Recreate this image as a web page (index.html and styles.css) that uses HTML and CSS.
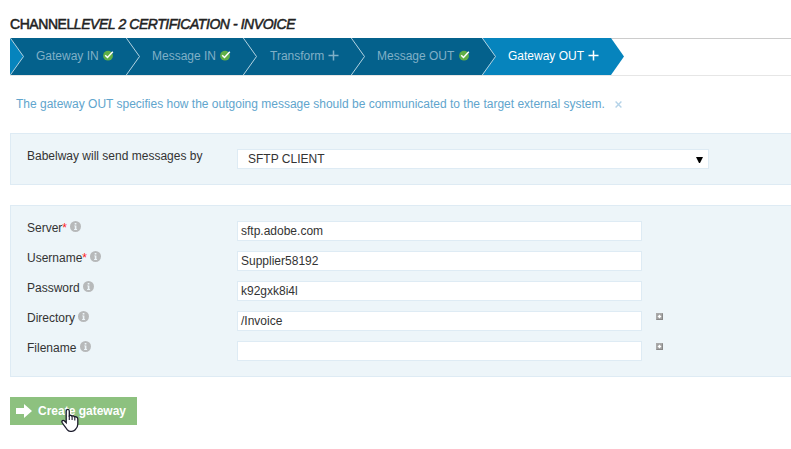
FILE: index.html
```html
<!DOCTYPE html>
<html lang="en">
<head>
<meta charset="utf-8">
<title>Gateway OUT</title>
<link rel="stylesheet" href="styles.css">
</head>
<body>
<svg width="0" height="0" class="defs">
  <defs>
    <symbol id="check" viewBox="0 0 11 11"><circle cx="5" cy="5.7" r="4.9" fill="#5fae47"/><path d="M2.2 5.2 4.5 7.5 9.8 1.8" fill="none" stroke="#fff" stroke-width="1.5"/></symbol>
    <symbol id="plus" viewBox="0 0 11 11"><path d="M5.5 .5V10.5M.5 5.5H10.5" fill="none" stroke="currentColor" stroke-width="1.5"/></symbol>
    <symbol id="info" viewBox="0 0 11 11"><circle cx="5.5" cy="5.5" r="5.5" fill="#b7b9ba"/><path d="M4.7 2h1.7v1.4H4.7zM4.2 4.4h2.2v3.5h.7v1H4.1v-1h.7V5.3h-.6z" fill="#edf5f9"/></symbol>
    <symbol id="expand" viewBox="0 0 7 7"><path d="M0 0h7v7H0z" fill="#888"/><path d="M0 0h7L0 7z" fill="#aaa"/><path d="M1 1h5v5H1z" fill="#a3a3a3"/><path d="M3 2h1v1h1v1H4v1H3V4H2V3h1z" fill="#fff" stroke="#fff" stroke-width=".4"/></symbol>
  </defs>
</svg>
<h1 class="title">CHANNEL<em>LEVEL 2 CERTIFICATION - INVOICE</em></h1>
<nav class="steps">
  <div class="step gateway-in"><svg class="chevron" viewBox="0 0 14 37"><path d="M0 0 13.5 18.5 0 37z" fill="#0684bd"/><path class="edge" d="M.3 0 13.5 18.5 .3 37"/></svg><span>Gateway IN</span><svg class="mark"><use href="#check"/></svg></div>
  <div class="step message-in"><svg class="chevron" viewBox="0 0 14 37"><path class="edge" d="M.3 0 13.5 18.5 .3 37"/></svg><span>Message IN</span><svg class="mark"><use href="#check"/></svg></div>
  <div class="step transform"><svg class="chevron" viewBox="0 0 14 37"><path class="edge" d="M.3 0 13.5 18.5 .3 37"/></svg><span>Transform</span><svg class="mark"><use href="#plus"/></svg></div>
  <div class="step message-out"><svg class="chevron" viewBox="0 0 14 37"><path class="edge" d="M.3 0 13.5 18.5 .3 37"/></svg><span>Message OUT</span><svg class="mark"><use href="#check"/></svg></div>
  <div class="step gateway-out"><svg class="chevron" viewBox="0 0 14 37"><path d="M0 0 13.5 18.5 0 37z" fill="#04618c"/><path class="edge" d="M.3 0 13.5 18.5 .3 37"/></svg><span>Gateway OUT</span><svg class="mark"><use href="#plus"/></svg></div>
  <svg class="chevron" viewBox="0 0 14 37"><path d="M0 0 13 18.5 0 37z" fill="#0684bd"/></svg>
</nav>
<p class="hint"><span>The gateway OUT specifies how the outgoing message should be communicated to the target external system.</span><svg class="close" viewBox="0 0 7 7"><path d="M.6 .6 6.4 6.4M6.4 .6 .6 6.4"/></svg></p>
<section class="panel method">
  <span class="label">Babelway will send messages by</span>
  <div class="select"><span>SFTP CLIENT</span><svg class="arrow" viewBox="0 0 7 6"><path d="M0 0h7L4 6H3z"/></svg></div>
</section>
<section class="panel fields">
  <div class="row"><div class="label"><span>Server<b>*</b></span><svg class="info"><use href="#info"/></svg></div><div class="field">sftp.adobe.com</div></div>
  <div class="row"><div class="label"><span>Username<b>*</b></span><svg class="info"><use href="#info"/></svg></div><div class="field">Supplier58192</div></div>
  <div class="row"><div class="label"><span>Password</span><svg class="info"><use href="#info"/></svg></div><div class="field">k92gxk8i4l</div></div>
  <div class="row"><div class="label"><span>Directory</span><svg class="info"><use href="#info"/></svg></div><div class="field">/Invoice</div><svg class="expand"><use href="#expand"/></svg></div>
  <div class="row"><div class="label"><span>Filename</span><svg class="info"><use href="#info"/></svg></div><div class="field"></div><svg class="expand"><use href="#expand"/></svg></div>
</section>
<div class="create"><svg class="go" viewBox="0 0 16 14"><path d="M0 4h8V0l8 7-8 7v-4H0z"/></svg><span>Create gateway</span>
  <svg class="cursor" viewBox="0 0 18 24"><path d="M5.5 1.5C6.8.3 8.3 1 8.3 2.8v4.4c.8-.6 2-.5 2.6.4.9-.5 2-.2 2.5.8 1.6-.5 3.4.4 3.4 2.2v5.1c0 2.6-1 4-2.6 5.6-1 1.1-2 1.5-3.4 1.5H9.2c-1.4 0-2.2-.5-3-1.6C4.6 18.8 2.5 16.5 1 13.8c-.6-1.4 1.1-2.5 2.3-1.5l1.9 1.9V2.8z" fill="#fff" stroke="#1b1b2b" stroke-width="1.3"/><path d="M8.3 7v4.5M11.1 7.8v3.7M13.8 8.8v3.2" stroke="#1b1b2b" stroke-width="1.1"/></svg>
</div>
</body>
</html>
```
FILE: styles.css
```css
* { box-sizing: border-box; }
body { margin: 0; padding: 15px 0 0 10px; height: 449px; overflow: hidden; background: #fff; color: #333; font: 12px/18px "Liberation Sans", Arial, sans-serif; }
svg { flex: none; display: block; }
.defs { position: absolute; }
.title { margin: 0 0 5px; font-size: 14px; line-height: 18px; font-weight: normal; -webkit-text-stroke: .5px #222; letter-spacing: -.44px; white-space: nowrap; color: #222; }
.steps { display: flex; height: 38px; border-bottom: 1px solid #e6e6e6; background: linear-gradient(#ccc 1px, #fff 1px); }
.step { display: flex; align-items: center; height: 37px; background: #04618c; color: #80b0c7; white-space: nowrap; }
.step > span { margin: -2px 4px 0 12px; }
.chevron { width: 14px; height: 37px; }
.edge { fill: none; stroke: #b4d3e1; stroke-width: 1; }
.mark { width: 11px; height: 11px; margin-top: -3px; }
.gateway-in { width: 116px; }
.message-in { width: 117px; }
.transform { width: 108px; }
.transform > span { margin-left: 13px; }
.message-out { width: 131px; }
.message-out .mark { margin-left: 1px; }
.gateway-out { width: 129px; background: #0684bd; color: #fff; }
.hint { display: flex; align-items: center; margin: 19px 0 20px 6px; color: #61a5cd; white-space: nowrap; }
.close { width: 7px; height: 7px; margin: 1px 0 0 10px; fill: none; stroke: #b5d3e8; stroke-width: 1.4; }
.panel { background: #edf5f9; border: 1px solid #deebf4; border-right: 0; padding-left: 16px; }
.method { display: flex; align-items: flex-start; height: 52px; padding-top: 13px; margin-bottom: 20px; }
.label { flex: none; display: flex; width: 210px; }
.label b { color: #f22; font-weight: normal; }
.select { display: flex; align-items: center; justify-content: space-between; width: 472px; height: 20px; margin-top: 2px; padding: 0 5px 0 10px; background: #fff; border: 1px solid #deebf4; }
.arrow { width: 7px; height: 6px; margin-top: 2px; fill: #000; }
.fields { height: 172px; padding-top: 13px; }
.row { display: flex; height: 30px; }
.info { width: 11px; height: 11px; margin: 2px 0 0 3.4px; }
.field { width: 405px; height: 20px; margin-top: 2px; padding-left: 3px; background: #fff; border: 1px solid #deebf4; }
.expand { width: 7px; height: 7px; margin: 4px 0 0 14px; }
.create { position: relative; display: flex; align-items: center; width: 127px; height: 28px; margin-top: 20px; padding-left: 6px; background: #8dc17f; color: #fff; font-weight: bold; white-space: nowrap; }
.go { width: 16px; height: 14px; margin-right: 6px; fill: #fff; }
.cursor { position: absolute; left: 51px; top: 11px; width: 18px; height: 25px; }
```
